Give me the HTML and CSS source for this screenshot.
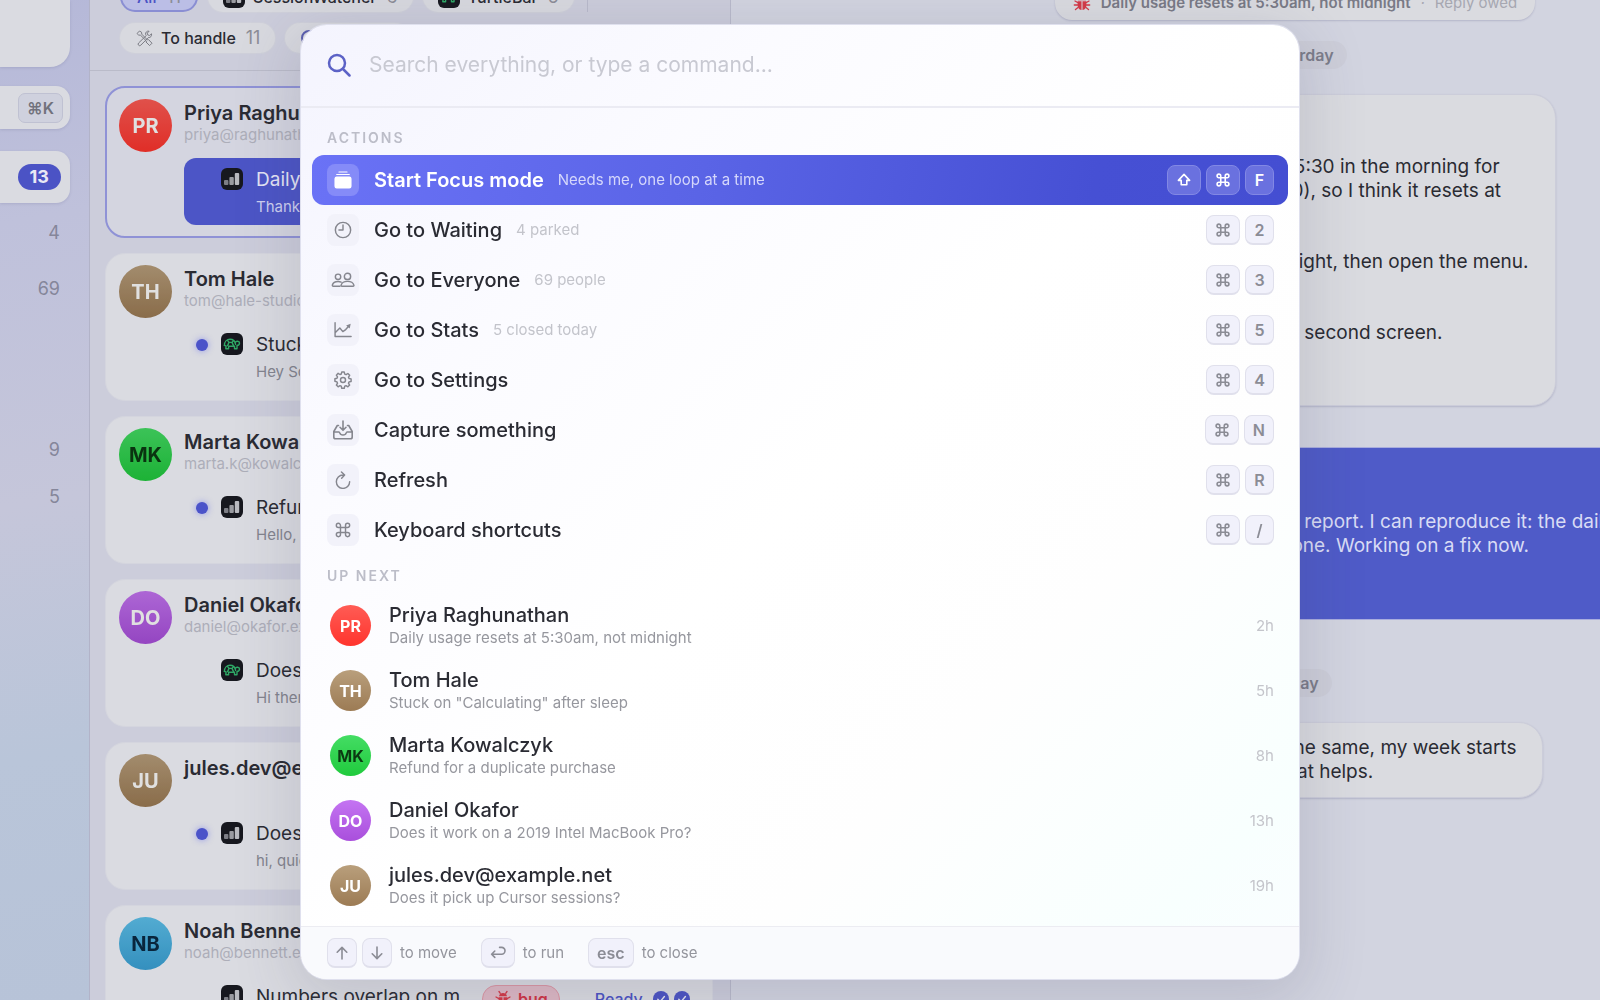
FILE: index.html
```html
<!DOCTYPE html>
<html lang="en">
<head>
    <meta charset="UTF-8">
    <meta name="viewport" content="width=device-width, initial-scale=1.0">
    <title>Inbox</title>
    <link rel="stylesheet" href="styles.css">
</head>
<body>
    <!-- Shared icons -->
    <svg class="sprite" aria-hidden="true">
        <symbol id="i-cmd" viewBox="0 0 20 20">
            <path d="M7.2 7.2V4.9A2.3 2.3 0 1 0 4.9 7.2H15.1A2.3 2.3 0 1 0 12.8 4.9V15.1A2.3 2.3 0 1 0 15.1 12.8H4.9A2.3 2.3 0 1 0 7.2 15.1Z"/>
        </symbol>
        <symbol id="i-bars" viewBox="0 0 22 22">
            <rect width="22" height="22" rx="6" fill="#17181f"/>
            <rect x="3" y="12" width="4.4" height="5" rx="1" fill="#7d7e86"/>
            <rect x="8.400" y="9" width="4.400" height="8" rx="1" fill="#9a9ba1"/>
            <rect x="13.800" y="5" width="4.400" height="12" rx="1" fill="#b9bac0"/>
        </symbol>
        <symbol id="i-turtle" viewBox="0 0 22 22">
            <rect width="22" height="22" rx="6" fill="#17181f"/>
            <g fill="none" stroke="#2fa866" stroke-width="1.4" stroke-linejoin="round" stroke-linecap="round">
                <path d="M3.4 12.4C3.4 8.600 6 6.300 9 6.300s5.200 2 5.600 5.200"/>
                <path d="M14.300 9.400c.6-1.700 4.200-1.500 4.200.6 0 1.700-1.400 2.400-2.500 2.400v3.300h-2.500v-2.400H7.600v2.400H4.800l.3-2.700-1.700-.6"/>
                <path d="M6.600 12.600 8 9.400h3l1.500 3.200M8 9.400 6.700 7.600M11 9.400l1.400-1.600"/>
            </g>
        </symbol>
        <symbol id="i-bug" viewBox="0 0 18 18">
            <path d="M5 6.200C5.400 4 7 3 9 3s3.600 1 4 3.200Z" fill="#d43a48"/>
            <path d="M4.600 7.200h3.900V16C5.800 15.700 4.600 13.600 4.600 11ZM9.500 7.200h3.900V11c0 2.600-1.200 4.700-3.900 5Z" fill="#d43a48"/>
            <path d="M6.300 3.300 5 1.500M11.700 3.300 13 1.500M4.600 8.500 2 7M4.600 11H1.300M5 13.500 2.500 15.500M13.400 8.500 16 7M13.400 11h3.300M13 13.500l2.500 2" fill="none" stroke="#d43a48" stroke-width="1.300" stroke-linecap="round"/>
        </symbol>
        <symbol id="i-check" viewBox="0 0 16 16">
            <circle cx="8" cy="8" r="8" fill="#4c54c4"/>
            <path d="m4.800 8.300 2.300 2.400 4.300-5.200" fill="none" stroke="#e6e7f2" stroke-width="1.400" stroke-linecap="round" stroke-linejoin="round"/>
        </symbol>
    </svg>

    <div class="app">
        <nav class="sidebar">
            <div class="side-card side-profile"></div>
            <div class="side-card side-search"><kbd>⌘K</kbd></div>
            <a href="#" class="side-card side-active"><span class="badge">13</span></a>
            <a href="#" class="side-link">4</a>
            <a href="#" class="side-link">69</a>
            <div class="side-group">
                <a href="#" class="side-link small">9</a>
                <a href="#" class="side-link small">5</a>
            </div>
        </nav>

        <section class="inbox">
            <div class="filters">
                <div class="filter-row">
                    <button class="chip active">All <span>11</span></button>
                    <button class="chip"><svg class="app-icon"><use href="#i-bars"/></svg>SessionWatcher <span>6</span></button>
                    <button class="chip"><svg class="app-icon"><use href="#i-turtle"/></svg>TurtleBar <span>5</span></button>
                    <i class="divider"></i>
                </div>
                <div class="filter-row">
                    <button class="chip">
                        <svg class="tools" viewBox="0 0 18 18"><path d="M2 4.500 4.500 2l2 1.200.3 2L12.500 11l1-.4L17 14.200 14.600 16.600 11 13l.4-1L5.600 6.300l-2-.3ZM11.300 6.500 3.600 14a1.500 1.500 0 0 0 2.200 2.200L13.300 8.600c2.200.3 3.800-1.700 3.200-3.800L14.600 6.500l-1.900-.6-.4-1.800 1.800-1.900c-2-.6-4 1.300-3.500 3.300Z"/></svg>
                        To handle <span>11</span>
                    </button>
                    <button class="chip">
                        <svg class="ring" viewBox="0 0 18 18"><circle cx="9" cy="9" r="7"/></svg>
                        Ready <span>2</span>
                    </button>
                </div>
            </div>

            <div class="cards">
                <article class="card selected">
                    <span class="avatar red">PR</span>
                    <div class="card-body">
                        <h3>Priya Raghunathan</h3>
                        <p class="email">priya@raghunathan.example</p>
                        <div class="loop">
                            <i class="dot read"></i>
                            <svg class="app-icon"><use href="#i-bars"/></svg>
                            <div><h4>Daily usage resets at 5:30am</h4><p>Thanks for looking into it</p></div>
                        </div>
                    </div>
                </article>
                <article class="card">
                    <span class="avatar tan">TH</span>
                    <div class="card-body">
                        <h3>Tom Hale</h3>
                        <p class="email">tom@hale-studio.example</p>
                        <div class="loop">
                            <i class="dot"></i>
                            <svg class="app-icon"><use href="#i-turtle"/></svg>
                            <div><h4>Stuck on "Calculating"</h4><p>Hey Sonny, after sleep it hangs</p></div>
                        </div>
                    </div>
                </article>
                <article class="card">
                    <span class="avatar green">MK</span>
                    <div class="card-body">
                        <h3>Marta Kowalczyk</h3>
                        <p class="email">marta.k@kowalczyk.example</p>
                        <div class="loop">
                            <i class="dot"></i>
                            <svg class="app-icon"><use href="#i-bars"/></svg>
                            <div><h4>Refund for a duplicate</h4><p>Hello, I was charged twice</p></div>
                        </div>
                    </div>
                </article>
                <article class="card">
                    <span class="avatar purple">DO</span>
                    <div class="card-body">
                        <h3>Daniel Okafor</h3>
                        <p class="email">daniel@okafor.example</p>
                        <div class="loop">
                            <i class="dot read"></i>
                            <svg class="app-icon"><use href="#i-turtle"/></svg>
                            <div><h4>Does it work on a 2019 Intel</h4><p>Hi there, before I buy</p></div>
                        </div>
                    </div>
                </article>
                <article class="card">
                    <span class="avatar tan">JU</span>
                    <div class="card-body">
                        <h3>jules.dev@example.net</h3>
                        <p class="email">&nbsp;</p>
                        <div class="loop">
                            <i class="dot"></i>
                            <svg class="app-icon"><use href="#i-bars"/></svg>
                            <div><h4>Does it pick up Cursor</h4><p>hi, quick question</p></div>
                        </div>
                    </div>
                </article>
                <article class="card">
                    <span class="avatar blue">NB</span>
                    <div class="card-body">
                        <h3>Noah Bennett</h3>
                        <p class="email">noah@bennett.example</p>
                        <div class="loop">
                            <i class="dot read"></i>
                            <svg class="app-icon"><use href="#i-bars"/></svg>
                            <div class="loop-text"><h4>Numbers overlap on m</h4><p>Small thing</p></div>
                            <span class="tag"><svg><use href="#i-bug"/></svg>bug</span>
                            <span class="ready"><span>Ready</span><svg><use href="#i-check"/></svg><svg><use href="#i-check"/></svg></span>
                        </div>
                    </div>
                </article>
            </div>
        </section>

        <main class="thread">
            <div class="topic"><svg><use href="#i-bug"/></svg><b>Daily usage resets at 5:30am, not midnight</b><i>·</i><span>Reply owed</span></div>
            <div class="day">Yesterday</div>
            <div class="bubble">
                <p>Hi,</p>
                <p>The daily usage total goes back to zero again at around 5:30 in the morning for<br>me, and not at midnight. I am working in India (UTC+5:30), so I think it resets at</p>
                <p>To see it happen:<br>leave the menu bar app running on the studio Mac overnight, then open the menu.</p>
                <p>One more thing:<br>it often still shows the old number in the menu bar on my second screen.</p>
                <p>Priya</p>
            </div>
            <div class="bubble mine">
                <p>Hi Priya,</p>
                <p>Thanks for the clear report. I can reproduce it: the daily usage is set by UTC<br>and not your time zone. Working on a fix now.</p>
                <p>Talk soon</p>
            </div>
            <div class="day">Today</div>
            <div class="bubble">
                <p>Thank you too! The weekly view also looks to be doing the same, my week starts<br>on Monday morning at 5:30 in the menu bar as well, if that helps.</p>
            </div>
        </main>
    </div>

    <div class="palette" role="dialog" aria-label="Command palette">
        <label class="search">
            <svg viewBox="0 0 24 24"><circle cx="10" cy="10" r="8"/><path d="m16 16 6.500 6.500"/></svg>
            <input type="text" aria-label="Search" placeholder="Search everything, or type a command...">
        </label>

        <div class="results">
            <h2>Actions</h2>
            <button class="action current">
                <span class="tile"><svg viewBox="0 0 20 20"><path class="solid" d="M3 6h14a2.500 2.500 0 0 1 2.500 2.500V17a2.500 2.500 0 0 1-2.500 2.500H3A2.500 2.500 0 0 1 .5 17V8.500A2.500 2.500 0 0 1 3 6Z"/><path d="M3 3.800h14M5.500 1.200h9" stroke-width="1.200"/></svg></span>
                <span class="title">Start Focus mode</span><span class="note">Needs me, one loop at a time</span>
                <span class="keys"><kbd><svg viewBox="0 0 20 20"><path d="M10 3 3 10.500h3.500V16h7v-5.500H17Z"/></svg></kbd><kbd><svg><use href="#i-cmd"/></svg></kbd><kbd>F</kbd></span>
            </button>
            <button class="action">
                <span class="tile"><svg viewBox="0 0 20 20"><circle cx="10" cy="10" r="8.500"/><path d="M10 4.500V10H5.500"/></svg></span>
                <span class="title">Go to Waiting</span><span class="note">4 parked</span>
                <span class="keys"><kbd><svg><use href="#i-cmd"/></svg></kbd><kbd>2</kbd></span>
            </button>
            <button class="action">
                <span class="tile"><svg class="wide" viewBox="0 0 26 20"><circle cx="7.500" cy="6.500" r="3"/><circle cx="18" cy="6" r="3.500"/><path d="M9.500 17H2.200c-.8 0-1.200-.6-1-1.400.6-2.300 3-4 6.300-4 1.300 0 2.500.3 3.400.8M11.800 17h12.400c.8 0 1.100-.6.9-1.300-.7-2.500-3.500-4.200-7.100-4.200s-6.400 1.700-7.100 4.200c-.2.700.1 1.300.9 1.300Z"/></svg></span>
                <span class="title">Go to Everyone</span><span class="note">69 people</span>
                <span class="keys"><kbd><svg><use href="#i-cmd"/></svg></kbd><kbd>3</kbd></span>
            </button>
            <button class="action">
                <span class="tile"><svg viewBox="0 0 20 20"><path d="M1.200 2v15.200H19M1.800 12.500l4.700-4.700 3.300 4 3.200-2.300 3.500-4"/><path class="solid" d="m18.500 3-1 5.200-4-3.200Z"/></svg></span>
                <span class="title">Go to Stats</span><span class="note">5 closed today</span>
                <span class="keys"><kbd><svg><use href="#i-cmd"/></svg></kbd><kbd>5</kbd></span>
            </button>
            <button class="action">
                <span class="tile"><svg viewBox="0 0 20 20"><circle cx="10" cy="10" r="2.800"/><path d="m8.600 1.200h2.800l.5 2.300 1.500.6 2-1.300 2 2-1.300 2 .6 1.500 2.300.5v2.800l-2.300.5-.6 1.500 1.300 2-2 2-2-1.300-1.500.6-.5 2.300H8.600l-.5-2.300-1.500-.6-2 1.300-2-2 1.300-2-.6-1.500L1 11.400V8.600l2.300-.5.6-1.500-1.300-2 2-2 2 1.300 1.500-.6Z"/></svg></span>
                <span class="title">Go to Settings</span>
                <span class="keys"><kbd><svg><use href="#i-cmd"/></svg></kbd><kbd>4</kbd></span>
            </button>
            <button class="action">
                <span class="tile"><svg class="large" viewBox="0 0 20 20"><path d="M10 1v9M7 7.300l3 3 3-3M5.500 5.500H4.300L.8 11.500V17c0 1 .7 1.800 1.700 1.800h15c1 0 1.700-.8 1.700-1.800v-5.500l-3.500-6h-1.200M.8 12h5c.6 0 .9.400 1 .9.400 1.400 1.600 2.100 3.200 2.100s2.800-.7 3.200-2.100c.1-.5.4-.9 1-.9h5"/></svg></span>
                <span class="title">Capture something</span>
                <span class="keys"><kbd><svg><use href="#i-cmd"/></svg></kbd><kbd>N</kbd></span>
            </button>
            <button class="action">
                <span class="tile"><svg viewBox="0 0 20 20"><path d="M11 4.500h-1A7.400 7.400 0 1 0 17.400 12M8.300 1l3.500 3.500L8.500 8"/></svg></span>
                <span class="title">Refresh</span>
                <span class="keys"><kbd><svg><use href="#i-cmd"/></svg></kbd><kbd>R</kbd></span>
            </button>
            <button class="action">
                <span class="tile"><svg><use href="#i-cmd"/></svg></span>
                <span class="title">Keyboard shortcuts</span>
                <span class="keys"><kbd><svg><use href="#i-cmd"/></svg></kbd><kbd>/</kbd></span>
            </button>

            <h2>Up next</h2>
            <button class="person">
                <span class="avatar red">PR</span>
                <span class="who"><b>Priya Raghunathan</b><small>Daily usage resets at 5:30am, not midnight</small></span>
                <time>2h</time>
            </button>
            <button class="person">
                <span class="avatar tan">TH</span>
                <span class="who"><b>Tom Hale</b><small>Stuck on "Calculating" after sleep</small></span>
                <time>5h</time>
            </button>
            <button class="person">
                <span class="avatar green">MK</span>
                <span class="who"><b>Marta Kowalczyk</b><small>Refund for a duplicate purchase</small></span>
                <time>8h</time>
            </button>
            <button class="person">
                <span class="avatar purple">DO</span>
                <span class="who"><b>Daniel Okafor</b><small>Does it work on a 2019 Intel MacBook Pro?</small></span>
                <time>13h</time>
            </button>
            <button class="person">
                <span class="avatar tan">JU</span>
                <span class="who"><b>jules.dev@example.net</b><small>Does it pick up Cursor sessions?</small></span>
                <time>19h</time>
            </button>
        </div>

        <footer>
            <span class="hint"><kbd class="narrow"><svg viewBox="0 0 20 20"><path d="M10 17.500V3M4 9l6-6 6 6"/></svg></kbd><kbd class="narrow"><svg viewBox="0 0 20 20"><path d="M10 2.500V17M4 11l6 6 6-6"/></svg></kbd>to move</span>
            <span class="hint"><kbd><svg viewBox="0 0 20 20"><path d="M12 3h2.500a4.200 4.200 0 0 1 0 8.500H2M6 7.500l-4 4 4 4"/></svg></kbd>to run</span>
            <span class="hint"><kbd>esc</kbd>to close</span>
        </footer>
    </div>
</body>
</html>
```
FILE: styles.css
```css
* {
    margin: 0;
    padding: 0;
    box-sizing: border-box;
}

body {
    font-family: Inter, "Liberation Sans", sans-serif;
    font-size: 20px;
    line-height: 24px;
    color: #2a2b33;
    background-color: #d1d3df;
    overflow: hidden;
}

button {
    font: inherit;
    color: inherit;
    background: none;
    border: none;
    cursor: pointer;
}

a {
    color: inherit;
    text-decoration: none;
}

svg {
    flex: none;
}

.sprite {
    display: none;
}

kbd {
    font-family: inherit;
}

.app {
    display: grid;
    grid-template-columns: 90px 641px minmax(1128px, 1fr);
    height: 100vh;
    overflow: hidden;
}

/* Sidebar */
.sidebar {
    display: flex;
    flex-direction: column;
    align-items: stretch;
    padding-right: 19px;
    background: linear-gradient(170deg, #b5b8d8 0%, #bfc1db 22%, #c5c6da 50%, #b9c5d9 75%, #b7c3d8 100%);
    border-right: 1px solid #b2b3c8;
}

.side-card {
    display: flex;
    align-items: center;
    justify-content: flex-end;
    background-color: #dadbe1;
    border-radius: 0 14px 14px 0;
    box-shadow: 0 1px 3px rgba(60, 60, 110, 0.15);
}

.side-profile {
    height: 67px;
    margin-bottom: 19px;
    border-radius: 0 0 20px 0;
}

.side-search {
    height: 43px;
    margin-bottom: 22px;
    padding-right: 7px;
}

.side-search kbd {
    height: 30px;
    padding: 0 8px;
    border: 1px solid #bfc1d2;
    border-radius: 7px;
    background-color: #cfd1de;
    color: #71727c;
    font-size: 16px;
    font-weight: 600;
    line-height: 28px;
}

.side-active {
    height: 52px;
    margin-bottom: 2px;
    padding-right: 9px;
}

.badge {
    padding: 1px 12px;
    border-radius: 13px;
    background-color: #4b53c5;
    color: #e8e9f5;
    font-size: 18px;
    font-weight: 700;
}

.side-link {
    padding: 0 10px;
    color: #85869a;
    font-size: 18px;
    line-height: 56px;
    text-align: right;
}

.side-link.small {
    display: block;
    line-height: 47px;
}

.side-group {
    margin-top: 109px;
}

/* Inbox list */
.inbox {
    min-width: 0;
    border-right: 1px solid #b9bacb;
    background-color: #cccddb;
    overflow: hidden;
}

.filters {
    display: flex;
    flex-direction: column;
    gap: 11px;
    margin-top: -18px;
    padding: 0 30px 17px;
    border-bottom: 1px solid #babbc9;
}

.filter-row {
    display: flex;
    gap: 10px;
}

.chip {
    display: flex;
    align-items: center;
    gap: 8px;
    height: 30px;
    padding: 0 15px;
    border-radius: 15px;
    background-color: #d8d9df;
    box-shadow: 0 0 0 1px #cfd0da;
    font-size: 16px;
    font-weight: 500;
    white-space: nowrap;
}

.chip span {
    margin-left: 2px;
    color: #8c8d97;
    font-size: 18px;
    font-weight: 400;
}

.chip.active {
    border: 2px solid #8a8ed3;
    background-color: #bbbee6;
    box-shadow: none;
    color: #4b53c5;
}

.chip .tools,
.chip .ring {
    width: 18px;
    height: 18px;
    fill: none;
    stroke: #7b7c84;
    stroke-width: 1;
}

.chip .ring {
    stroke: #5b5fb0;
    stroke-width: 2;
}

.divider {
    width: 1px;
    margin-left: 3px;
    background-color: #b9bacb;
}

.app-icon {
    width: 22px;
    height: 22px;
}

.cards {
    display: flex;
    flex-direction: column;
    gap: 15px;
    padding: 15px 17px 0 15px;
}

.card {
    display: flex;
    flex: none;
    gap: 12px;
    height: 148px;
    padding: 11px 0 0 13px;
    border: 1px solid #d4d5de;
    border-radius: 20px;
    background-color: #dadbe1;
}

.card.selected {
    height: 152px;
    padding: 11px 0 0 12px;
    border: 2px solid #8f92d6;
    background-color: #d4d5e0;
}

.avatar {
    display: flex;
    align-items: center;
    justify-content: center;
    flex: none;
    border-radius: 50%;
    color: #ffffff;
    font-weight: 700;
}

.red { background: linear-gradient(#ff5c55, #ff342d); }
.tan { background: linear-gradient(#b99f7c, #9c7b54); }
.green { background: linear-gradient(#44dd64, #20ca3d); color: #0b3a12; }
.purple { background: linear-gradient(#c474f2, #a94fdc); }
.blue { background: linear-gradient(#5ec3ee, #3ba3d8); color: #0a2a44; }

.card .avatar {
    width: 53px;
    height: 53px;
    font-size: 20px;
    filter: brightness(0.88);
}

.card-body {
    flex: 1;
    min-width: 0;
    padding-top: 2px;
    white-space: nowrap;
}

.card h3 {
    font-size: 20px;
    font-weight: 600;
}

.email {
    color: #adaeb9;
    font-size: 15px;
    line-height: 20px;
}

.loop {
    display: flex;
    align-items: flex-start;
    gap: 13px;
    margin: 14px 16px 0 0;
    padding: 8px 0 6px 12px;
    border-radius: 12px;
}

.selected .loop {
    height: 67px;
    margin-top: 13px;
    padding-top: 10px;
    background-color: #4c55c6;
    color: #e3e4f4;
}

.loop h4 {
    font-size: 19px;
    font-weight: 400;
}

.loop p {
    margin-top: 3px;
    color: #83848e;
    font-size: 15px;
}

.selected .loop p {
    color: #cdcff0;
}

.dot {
    flex: none;
    width: 12px;
    height: 12px;
    margin: 6px 0;
    border-radius: 50%;
    background-color: #4b53c9;
    box-shadow: 0 0 6px rgba(75, 83, 240, 0.5);
}

.dot.read {
    visibility: hidden;
}

.loop-text {
    width: 213px;
}

.tag {
    display: flex;
    align-items: center;
    gap: 6px;
    height: 28px;
    padding: 0 11px;
    border: 1px solid #dc97a4;
    border-radius: 14px;
    background-color: #deb9c5;
    color: #cf3444;
    font-size: 16px;
    font-weight: 600;
}

.tag svg {
    width: 18px;
    height: 18px;
}

.ready {
    display: flex;
    align-items: center;
    gap: 5px;
    margin-left: 22px;
    color: #4c54c4;
    font-size: 16px;
    font-weight: 500;
    line-height: 28px;
}

.ready span {
    margin-right: 5px;
}

.ready svg {
    width: 16px;
    height: 16px;
}

/* Conversation */
.thread {
    display: flex;
    flex-direction: column;
    align-items: flex-start;
    margin-top: -14px;
    padding: 0 33px;
    background-color: #d2d4e0;
    font-size: 19px;
    white-space: nowrap;
}

.topic {
    display: flex;
    align-items: center;
    align-self: center;
    gap: 10px;
    height: 34px;
    padding: 0 18px;
    border-radius: 0 0 17px 17px;
    background-color: #dadbe0;
    box-shadow: 0 1px 2px rgba(60, 60, 110, 0.2);
    color: #a6a7b1;
    font-size: 15px;
}

.topic b {
    color: #797a86;
    font-weight: 600;
}

.topic svg {
    width: 18px;
    height: 18px;
}

.day {
    align-self: center;
    margin: 21px 0 25px;
    padding: 0 13px;
    border-radius: 14px;
    background-color: #cdced9;
    color: #7c7d8a;
    font-size: 16px;
    font-weight: 600;
    line-height: 28px;
}

.bubble {
    display: flex;
    flex-direction: column;
    gap: 23px;
    padding: 13px 26px;
    border: 1px solid #cccdda;
    border-radius: 24px;
    background-color: #dadbe0;
    box-shadow: 0 1px 2px rgba(60, 60, 110, 0.2);
}

.bubble.mine {
    align-self: flex-end;
    margin: 41px 0 28px;
    padding: 15px 26px 14px;
    border-radius: 0;
    border-color: #a9adde;
    background-color: #4f5bc8;
    box-shadow: none;
    color: #d9dcf5;
}

/* Command palette, over everything else */
.palette {
    position: fixed;
    top: 25px;
    left: 0;
    right: 0;
    width: min(998px, 96vw);
    margin: 0 auto;
    border-radius: 26px;
    background: linear-gradient(135deg, #f4f4fe 0%, #fbfbff 25%, #ffffff 50%, #fefefe 70%, #f8fffe 90%, #fafdff 100%);
    box-shadow: 0 0 0 1px #dfe0ee, 0 14px 60px 10px rgba(60, 60, 90, 0.15);
    overflow: hidden;
}

.search {
    display: flex;
    align-items: center;
    gap: 18px;
    height: 83px;
    padding: 0 26px 1px;
    border-bottom: 2px solid #ebebf3;
}

.search svg {
    width: 24px;
    height: 24px;
    fill: none;
    stroke: #5c62c6;
    stroke-width: 2.5;
    stroke-linecap: round;
}

.search input {
    flex: 1;
    border: none;
    outline: none;
    background: none;
    color: inherit;
    font: inherit;
    font-size: 21px;
}

.search input::placeholder {
    color: #c8c9d2;
    opacity: 1;
}

.results {
    padding: 9px 11px 8px;
}

.results h2 {
    padding: 11px 15px 7px;
    color: #bcbdc8;
    font-size: 14px;
    font-weight: 600;
    line-height: 20px;
    letter-spacing: 2px;
    text-transform: uppercase;
}

.action,
.person {
    display: flex;
    align-items: center;
    width: 100%;
    padding: 0 14px 0 15px;
    border-radius: 12px;
    text-align: left;
}

.action {
    height: 50px;
}

.tile {
    display: flex;
    align-items: center;
    justify-content: center;
    width: 32px;
    height: 32px;
    margin-right: 15px;
    border-radius: 8px;
    background-color: #f2f2fa;
    color: #85868e;
}

.tile svg,
.palette kbd svg {
    width: 18px;
    height: 18px;
    fill: none;
    stroke: currentColor;
    stroke-width: 1.6;
    stroke-linecap: round;
    stroke-linejoin: round;
}

.tile svg.wide {
    width: 24px;
}

.tile svg.large {
    width: 20px;
    height: 20px;
}

.tile .solid {
    fill: currentColor;
    stroke: none;
}

.title {
    margin-right: 14px;
    font-weight: 500;
}

.note {
    color: #c3c4cb;
    font-size: 15px;
}

.keys {
    display: flex;
    gap: 5px;
    margin-left: auto;
}

.palette kbd {
    display: flex;
    align-items: center;
    justify-content: center;
    min-width: 29px;
    height: 30px;
    padding: 0 8px;
    border: 1px solid #e0e0ec;
    border-bottom-width: 2px;
    border-radius: 8px;
    background-color: #f1f1fb;
    color: #8b8c95;
    font-size: 16px;
    font-weight: 600;
}

.palette kbd.narrow {
    padding: 0 6px;
}

.palette kbd svg {
    width: 16px;
    height: 16px;
    stroke-width: 2;
}

.current {
    background: linear-gradient(100deg, #6a72f6 0%, #5a64e6 40%, #4650d4 80%, #444ed2 100%);
    color: #ffffff;
}

.current .tile {
    background-color: #858bf8;
    color: #ffffff;
}

.current .title {
    font-weight: 600;
}

.current .note {
    color: #d5d7fb;
}

.palette .current kbd {
    border: 1px solid #8288e4;
    background-color: #6a71df;
    color: #ffffff;
}

.person {
    height: 65px;
    padding-left: 18px;
}

.person .avatar {
    width: 41px;
    height: 41px;
    margin-right: 18px;
    font-size: 16px;
}

.who {
    display: flex;
    flex-direction: column;
    flex: 1;
}

.who b {
    font-weight: 500;
}

.who small {
    color: #96979e;
    font-size: 15px;
    line-height: 22px;
}

.person time {
    color: #c4c5cb;
    font-size: 15px;
}

.palette footer {
    display: flex;
    align-items: center;
    gap: 24px;
    height: 53px;
    padding: 0 26px;
    border-top: 1px solid #ececf2;
    background-color: #f9fafd;
}

.hint {
    display: flex;
    align-items: center;
    gap: 5px;
    color: #94959d;
    font-size: 15px;
}

.hint kbd:last-of-type {
    margin-right: 3px;
}
```
